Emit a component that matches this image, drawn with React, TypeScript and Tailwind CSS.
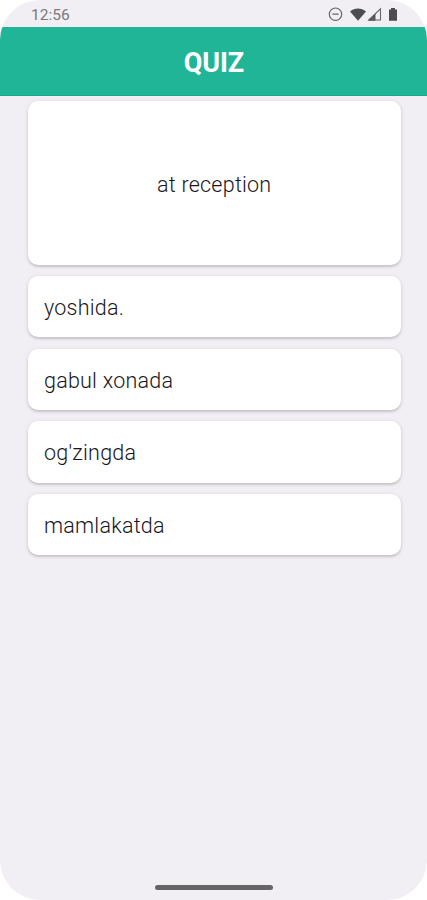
import React from 'react';

const answers = ['yoshida.', 'gabul xonada', "og'zingda", 'mamlakatda'];

const cardShadow = 'shadow-[0_1px_4px_rgba(0,0,0,0.13),0_2px_2px_rgba(0,0,0,0.10)]';

const StatusBar = () => (
  <div className="h-[27px] shrink-0 flex items-center justify-between pl-[31px] pr-[28px] pt-[3px]">
    <span className="pt-px text-[15.5px] leading-none text-[#7b797c]">12:56</span>
    <svg width="71" height="16" viewBox="0 0 71 16" fill="none">
      {/* Do not disturb */}
      <circle cx="7.5" cy="7.2" r="6.2" stroke="#69676b" strokeWidth="1.2" />
      <path d="M4.3 7.2h6.4" stroke="#69676b" strokeWidth="1.3" />
      {/* Wifi */}
      <path d="M22 4.5C26.5 0.6 33.5 0.6 38 4.5L30 13.8Z" fill="#4d4c4f" />
      {/* Signal */}
      <path d="M40.8 13L52.5 1.8V13Z" stroke="#69676b" strokeWidth="1.1" />
      <path d="M40 13.8L47.5 6.6v7.2Z" fill="#59575b" />
      {/* Battery */}
      <path d="M61 2.4h2V0.9h4v1.5h2v11.4h-8Z" fill="#4d4c4f" />
    </svg>
  </div>
);

const App = () => {
  return (
    <div className="bg-white font-[Roboto,sans-serif]">
      <div className="w-[427px] h-[900px] flex flex-col bg-[#f1eff3] rounded-[40px] overflow-hidden">
        <StatusBar />

        <header className="h-[69px] shrink-0 flex items-center justify-center bg-[#21b598] border-b border-[#12aa8b] pt-[4px] pl-[1px]">
          <h1 className="text-[27px] leading-none font-bold text-white tracking-[-0.1px]">QUIZ</h1>
        </header>

        <main className="grow pl-[28px] pr-[26.5px] pt-[5px]">
          <div className={`h-[163.5px] mb-[11.5px] flex items-center justify-center rounded-[10px] bg-white text-[21.5px] font-light text-[#18161c] tracking-[0.23px] pt-[4px] ${cardShadow}`}>
            at reception
          </div>
          <div className="flex flex-col gap-[11.2px]">
            {answers.map((answer) => (
              <button
                key={answer}
                className={`h-[61.4px] shrink-0 flex items-center rounded-[10px] bg-white px-[16px] pt-[3.5px] text-left text-[21.5px] font-light text-[#18161c] tracking-[0.23px] ${cardShadow}`}
              >
                {answer}
              </button>
            ))}
          </div>
        </main>

        {/* Home gesture bar */}
        <div className="w-[118px] h-[5px] mx-auto mb-[10px] shrink-0 rounded-full bg-[#656467]"></div>
      </div>
    </div>
  );
};

export default App;
